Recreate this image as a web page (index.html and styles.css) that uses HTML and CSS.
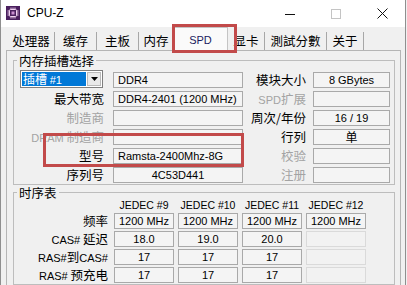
FILE: index.html
```html
<!DOCTYPE html>
<html lang="zh-CN">
<head>
<meta charset="utf-8">
<title>CPU-Z</title>
<link rel="stylesheet" href="styles.css">
</head>
<body>
<div class="window">
  <div class="titlebar">
    <svg class="app-icon" width="14" height="14" viewBox="0 0 14 14">
      <rect width="14" height="14" fill="#4a1f5e"/>
      <rect x="3.5" y="3.5" width="7" height="7" rx="1" fill="none" stroke="#f0d2f0" stroke-width="1"/>
      <rect x="5.5" y="5.5" width="3" height="3" fill="#c98fd0"/>
      <path d="M5 1.5v2M7 1.5v2M9 1.5v2M5 10.5v2M7 10.5v2M9 10.5v2M1.5 5h2M1.5 7h2M1.5 9h2M10.5 5h2M10.5 7h2M10.5 9h2" stroke="#f0d2f0" stroke-width="1"/>
    </svg>
    <span class="app-title">CPU-Z</span>
    <div class="controls">
      <span class="ctl"><svg width="10" height="10" viewBox="0 0 10 10"><path d="M0 5.5h10" stroke="#111" stroke-width="1"/></svg></span>
      <span class="ctl"><svg width="10" height="10" viewBox="0 0 10 10"><rect x="0.5" y="0.5" width="9" height="9" fill="none" stroke="#c4c4c4" stroke-width="1"/></svg></span>
      <span class="ctl"><svg width="11" height="11" viewBox="0 0 11 11"><path d="M0.5 0.5l10 10M10.5 0.5l-10 10" stroke="#111" stroke-width="1"/></svg></span>
    </div>
  </div>

  <div class="tabs">
    <div class="tab">处理器</div>
    <div class="tab">缓存</div>
    <div class="tab">主板</div>
    <div class="tab">内存</div>
    <div class="tab active"><span class="lat">SPD</span></div>
    <div class="tab">显卡</div>
    <div class="tab">測試分數</div>
    <div class="tab">关于</div>
  </div>

  <div class="panel">
    <fieldset class="group">
      <legend>内存插槽选择</legend>
      <div class="slot-grid">
        <div class="combo">
          <span class="combo-sel">插槽 <span class="lat">#1</span></span>
          <span class="combo-btn"><svg width="7" height="4" viewBox="0 0 7 4"><path d="M0 0h7L3.5 4z" fill="#000"/></svg></span>
        </div>
        <div class="field">DDR4</div>
        <div class="label">模块大小</div>
        <div class="field center">8 GBytes</div>

        <div class="label">最大带宽</div>
        <div class="field">DDR4-2401 (1200 MHz)</div>
        <div class="label dim"><span class="lat">SPD</span>扩展</div>
        <div class="field"></div>

        <div class="label dim">制造商</div>
        <div class="field"></div>
        <div class="label">周次/年份</div>
        <div class="field center">16 / 19</div>

        <div class="label dim"><span class="lat">DRAM</span> 制造商</div>
        <div class="field"></div>
        <div class="label">行列</div>
        <div class="field center cjk">单</div>

        <div class="label">型号</div>
        <div class="field">Ramsta-2400Mhz-8G</div>
        <div class="label dim">校验</div>
        <div class="field"></div>

        <div class="label">序列号</div>
        <div class="field center">4C53D441</div>
        <div class="label dim">注册</div>
        <div class="field"></div>
      </div>
    </fieldset>

    <fieldset class="group timings">
      <legend>时序表</legend>
      <div class="timing-grid">
        <div></div>
        <div class="head">JEDEC #9</div>
        <div class="head">JEDEC #10</div>
        <div class="head">JEDEC #11</div>
        <div class="head">JEDEC #12</div>

        <div class="label">频率</div>
        <div class="field center">1200 MHz</div>
        <div class="field center">1200 MHz</div>
        <div class="field center">1200 MHz</div>
        <div class="field center">1200 MHz</div>

        <div class="label"><span class="lat">CAS#</span> 延迟</div>
        <div class="field center">18.0</div>
        <div class="field center">19.0</div>
        <div class="field center">20.0</div>
        <div class="field empty"></div>

        <div class="label"><span class="lat">RAS#</span>到<span class="lat">CAS#</span></div>
        <div class="field center">17</div>
        <div class="field center">17</div>
        <div class="field center">17</div>
        <div class="field empty"></div>

        <div class="label"><span class="lat">RAS#</span> 预充电</div>
        <div class="field center">17</div>
        <div class="field center">17</div>
        <div class="field center">17</div>
        <div class="field empty"></div>
      </div>
    </fieldset>
  </div>

  <div class="annot annot-tab"></div>
  <div class="annot annot-model"></div>
</div>
</body>
</html>
```

FILE: styles.css
```css
* { box-sizing: border-box; }

html, body {
  margin: 0;
  padding: 0;
}

body {
  width: 407px;
  height: 285px;
  overflow: hidden;
  background: #f0f0f0;
  font-family: "Noto Sans CJK SC", "Liberation Sans", sans-serif;
  font-size: 12.5px;
  color: #000;
}

.lat {
  font-family: "Liberation Sans", Arial, sans-serif;
  font-size: 11px;
}

.window {
  position: relative;
  width: 406px;
  height: 285px;
  border-left: 1px solid #8f8f8f;
  border-right: 1px solid #8f8f8f;
  background: #f0f0f0;
}

/* title bar */
.titlebar {
  height: 27px;
  background: #ffffff;
  display: flex;
  align-items: center;
}

.app-icon {
  margin-left: 5px;
  margin-top: -1px;
  flex: none;
}

.app-title {
  margin-left: 7px;
  font-family: "Liberation Sans", Arial, sans-serif;
  font-size: 12px;
  margin-top: -1px;
}

.controls {
  margin-left: auto;
  display: flex;
  height: 27px;
}

.ctl {
  width: 46px;
  display: flex;
  align-items: center;
  justify-content: center;
}

/* tabs */
.tabs {
  height: 23px;
  margin-left: 7px;
  display: grid;
  grid-template-columns: 47px 42px 42px 35px 54px 37px 62px 37px;
  align-items: end;
}

.tab {
  height: 18px;
  line-height: 17px;
  text-align: center;
  border-right: 1px solid #a7a7a7;
  white-space: nowrap;
  font-size: 12.5px;
}

.tab.active {
  position: relative;
  z-index: 1;
  height: 24px;
  margin-bottom: -1px;
  margin-left: -1px;
  line-height: 22px;
  background: #fafafa;
  border: 1px solid #c4c4c4;
  border-bottom: none;
  color: #1a1a60;
}

.tab.active .lat {
  font-size: 11px;
}

/* panel */
.panel {
  margin-left: 5px;
  width: 395px;
  height: 240px;
  border: 1px solid #b5b5b5;
  padding: 3px 5px 0 6px;
  background: #f0f0f0;
}

.group {
  margin: 0;
  padding: 1px 0 1px 6px;
  border: 1px solid #bdbdbd;
  min-width: 0;
}

.group legend {
  padding: 0 2px;
  margin-left: -3px;
  line-height: 13px;
  font-size: 12.5px;
}

.group.timings {
  margin-top: 1px;
  padding-top: 1px;
}

/* slot grid */
.slot-grid {
  display: grid;
  grid-template-columns: 93px 130px 70px 77px;
  grid-template-rows: 18px repeat(5, 16px);
  row-gap: 3px;
  align-items: end;
  margin-top: 2px;
}

.label {
  height: 16px;
  line-height: 16px;
  text-align: right;
  white-space: nowrap;
  font-size: 12.5px;
}

.slot-grid .label:nth-child(4n+1) { padding-right: 9px; }
.slot-grid .label:nth-child(4n+3) { padding-right: 7px; }
.slot-grid > .label:nth-child(3) { padding-right: 7px; }

.label.dim { color: #a3a3a3; }

.field {
  height: 16px;
  border: 1px solid #a9a9a9;
  background: #f4f4f4;
  font-family: "Liberation Sans", Arial, sans-serif;
  font-size: 11px;
  line-height: 14px;
  padding-left: 4px;
  white-space: nowrap;
  overflow: hidden;
}

.field.center {
  text-align: center;
  padding-left: 0;
}

.field.cjk {
  font-family: "Noto Sans CJK SC", sans-serif;
  font-size: 12px;
  line-height: 13px;
  overflow: visible;
}

.field.empty {
  border-color: #dadada;
  background: #f2f2f2;
}

/* combo box */
.combo {
  height: 18px;
  width: 83px;
  display: flex;
  border: 1px solid #7f7f7f;
  background: #ffffff;
  padding: 1px;
}

.combo-sel {
  flex: 1;
  background: #0078d7;
  color: #ffffff;
  line-height: 14px;
  padding-left: 1px;
  white-space: nowrap;
  font-size: 12px;
}

.combo-btn {
  width: 14px;
  margin-left: 1px;
  background: #e9e9e9;
  border: 1px solid #b9b9b9;
  display: flex;
  align-items: center;
  justify-content: center;
}

/* timings */
.timing-grid {
  display: grid;
  grid-template-columns: 90px repeat(4, 60px);
  grid-template-rows: 11px repeat(4, 16px);
  column-gap: 4px;
  row-gap: 2px;
}

.timing-grid .label {
  padding-right: 2px;
}

.head {
  font-family: "Liberation Sans", Arial, sans-serif;
  font-size: 10.5px;
  line-height: 10px;
  text-align: center;
  white-space: nowrap;
}

/* annotation boxes drawn over the screenshot */
.annot {
  position: absolute;
  border: 3px solid #c24a4a;
  pointer-events: none;
  z-index: 5;
}

.annot-tab {
  left: 171px;
  top: 24px;
  width: 65px;
  height: 29px;
}

.annot-model {
  left: 42px;
  top: 133px;
  width: 201px;
  height: 34px;
}
```
